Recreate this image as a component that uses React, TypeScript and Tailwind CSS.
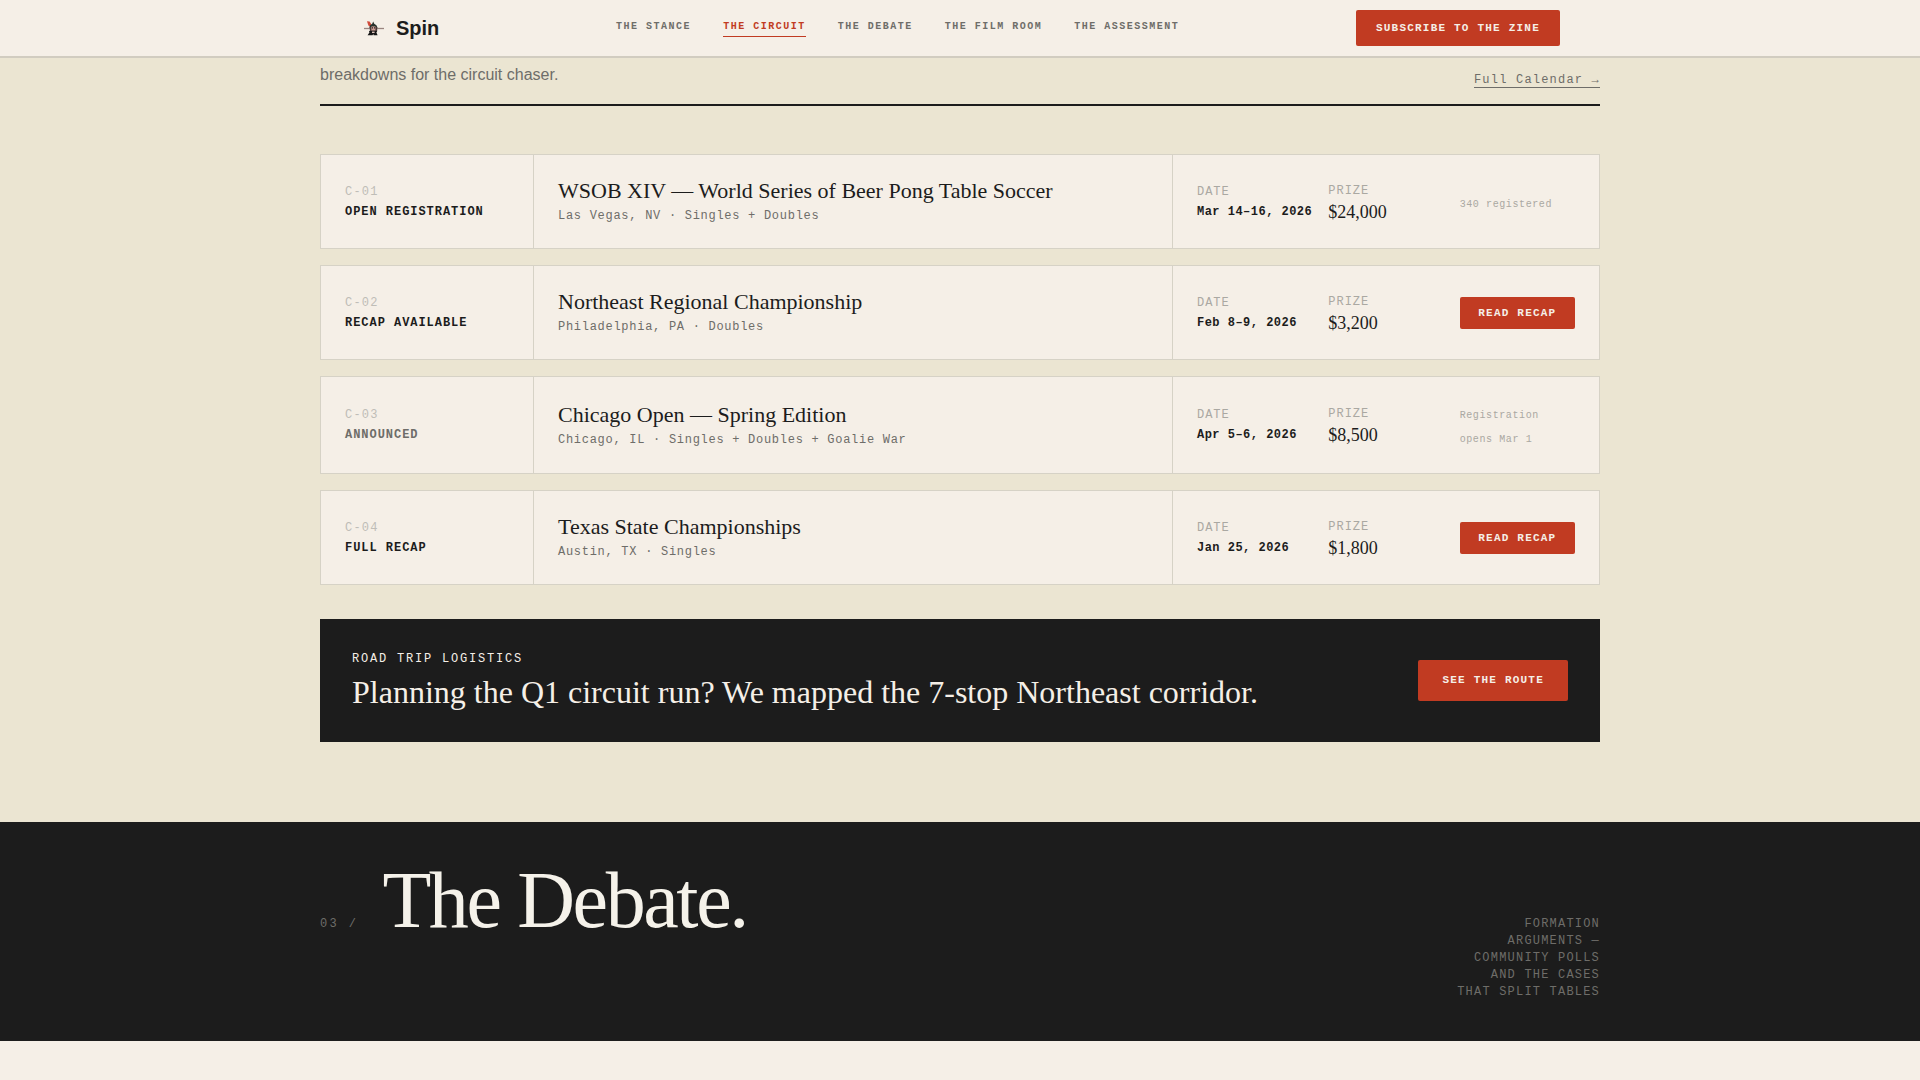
type NavItem = { label: string; href: string; active?: boolean };

const navItems: NavItem[] = [
  { label: "THE STANCE", href: "#stance" },
  { label: "THE CIRCUIT", href: "#circuit", active: true },
  { label: "THE DEBATE", href: "#debate" },
  { label: "THE FILM ROOM", href: "#film-room" },
  { label: "THE ASSESSMENT", href: "#assessment" },
];

type CircuitEvent = {
  id: string;
  status: string;
  muted?: boolean;
  title: string;
  place: string;
  date: string;
  prize: string;
  note?: string;
};

const events: CircuitEvent[] = [
  {
    id: "C-01",
    status: "OPEN REGISTRATION",
    title: "WSOB XIV — World Series of Beer Pong Table Soccer",
    place: "Las Vegas, NV · Singles + Doubles",
    date: "Mar 14–16, 2026",
    prize: "$24,000",
    note: "340 registered",
  },
  {
    id: "C-02",
    status: "RECAP AVAILABLE",
    title: "Northeast Regional Championship",
    place: "Philadelphia, PA · Doubles",
    date: "Feb 8–9, 2026",
    prize: "$3,200",
  },
  {
    id: "C-03",
    status: "ANNOUNCED",
    muted: true,
    title: "Chicago Open — Spring Edition",
    place: "Chicago, IL · Singles + Doubles + Goalie War",
    date: "Apr 5–6, 2026",
    prize: "$8,500",
    note: "Registration opens Mar 1",
  },
  {
    id: "C-04",
    status: "FULL RECAP",
    title: "Texas State Championships",
    place: "Austin, TX · Singles",
    date: "Jan 25, 2026",
    prize: "$1,800",
  },
];

function Logo() {
  return (
    <svg className="size-7" viewBox="0 0 28 28" aria-hidden="true">
      <path d="M4 14.500h20" stroke="#9a8580" strokeWidth="1.300" />
      <path d="M7 7.200l2.600.4 1.800 3-1 2.400-2-1.400z" fill="#d04a3a" />
      <path d="M9.200 13.800l1-2.600 2-1.400 1-2.200 1 2.200 2.200 1.400 1.200 2.600z" fill="#26322c" />
      <path d="M9.800 13h7.400v4l-1.800 1.400h-3.800L9.800 17z" fill="#4a3a38" />
      <path d="M11.400 12.400h4v4h-4z" fill="#cf9f96" />
      <path d="M12 13.200h1v1.200h-1zM14 13.200h1v1.200h-1z" fill="#2b2422" />
      <path d="M9 17h8.200l-.8 1.600 1.200 2.600h-4l-.4-1.400-.6 1.400h-5l1.800-2.600z" fill="#161616" />
      <path d="M12 17.600h2.600v1.400H12z" fill="#e0c4bc" />
    </svg>
  );
}

function ActionButton({ label, size }: { label: string; size: string }) {
  return (
    <button
      type="button"
      className={
        "rounded-xs bg-[#c13b22] text-center font-['Liberation_Mono',monospace] text-[11px] font-bold tracking-[0.11em] whitespace-nowrap text-[#f5efe7] " +
        size
      }
    >
      {label}
    </button>
  );
}

function Header() {
  return (
    <header className="border-b-2 border-[#d1ccc0] bg-[#f5efe7]">
      <div className="mx-auto flex max-w-[1280px] items-center justify-between px-10 py-2.5">
        <a href="#top" className="flex items-center gap-2">
          <Logo />
          <span className="text-xl font-bold">Spin</span>
        </a>
        <nav className="flex gap-8 font-['Liberation_Mono',monospace] text-[10px] leading-4 font-bold tracking-[0.15em]">
          {navItems.map((item) => (
            <a
              key={item.label}
              href={item.href}
              className={
                item.active
                  ? "border-b border-[#c13b22] pb-px text-[#c13b22]"
                  : "border-b border-transparent pb-px text-[#6e6d69]"
              }
            >
              {item.label}
            </a>
          ))}
        </nav>
        <ActionButton label="SUBSCRIBE TO THE ZINE" size="px-5 py-2.5 leading-4" />
      </div>
    </header>
  );
}

function EventRow({ event }: { event: CircuitEvent }) {
  return (
    <article className="grid grid-cols-[1fr_3fr_2fr] border border-[#d6d2c6] bg-[#f5efe7]">
      <div className="flex flex-col justify-center border-r border-[#d6d2c6] px-6 py-6 font-['Liberation_Mono',monospace] text-xs">
        <span className="leading-5 tracking-[0.1em] text-[#bfbdb7]">{event.id}</span>
        <span
          className={
            event.muted
              ? "leading-5 font-bold tracking-[0.08em] text-[#6e6d69]"
              : "leading-5 font-bold tracking-[0.08em] text-[#1c1c1c]"
          }
        >
          {event.status}
        </span>
      </div>
      <div className="flex flex-col justify-center border-r border-[#d6d2c6] px-6 py-6">
        <h3 className="font-['Liberation_Serif',serif] text-[22px] leading-6">{event.title}</h3>
        <p className="mt-1.5 font-['Liberation_Mono',monospace] text-xs leading-[15px] tracking-[0.06em] text-[#6e6d69]">
          {event.place}
        </p>
      </div>
      <div className="grid grid-cols-3 items-center gap-4 px-6 py-6">
        <div className="flex flex-col font-['Liberation_Mono',monospace] text-xs">
          <span className="leading-5 tracking-[0.08em] text-[#aaa8a2]">DATE</span>
          <span className="leading-5 font-bold tracking-[0.04em] whitespace-nowrap">{event.date}</span>
        </div>
        <div className="flex flex-col">
          <span className="font-['Liberation_Mono',monospace] text-xs leading-5 tracking-[0.08em] text-[#aaa8a2]">
            PRIZE
          </span>
          <span className="font-['Liberation_Serif',serif] text-lg leading-[22px]">{event.prize}</span>
        </div>
        {event.note ? (
          <p className="text-base leading-6">
            <span className="font-['Liberation_Mono',monospace] text-[10px] leading-none tracking-[0.06em] text-[#aaa8a2]">
              {event.note}
            </span>
          </p>
        ) : (
          <ActionButton label="READ RECAP" size="w-full py-2 leading-4" />
        )}
      </div>
    </article>
  );
}

export default function App() {
  return (
    <div className="min-h-screen bg-[#f5efe7] font-['Liberation_Sans',sans-serif] text-[#1c1c1c]">
      <Header />
      <main>
        <section id="circuit" className="bg-[#ebe5d2] pt-1 pb-20">
          <div className="mx-auto max-w-[1280px]">
            <div className="flex items-end justify-between border-b-2 border-[#1c1c1c] pb-4">
              <p className="text-base leading-[26px] text-[#6e6d69]">breakdowns for the circuit chaser.</p>
              <a
                href="#calendar"
                className="border-b border-[#6e6d69] font-['Liberation_Mono',monospace] text-xs leading-[14px] tracking-[0.1em] text-[#6e6d69]"
              >
                Full Calendar →
              </a>
            </div>
            <div className="mt-12 flex flex-col gap-4">
              {events.map((event) => (
                <EventRow key={event.id} event={event} />
              ))}
            </div>
            <aside className="mt-[34px] flex items-center justify-between bg-[#1c1c1c] p-8 text-[#f5efe7]">
              <div>
                <p className="font-['Liberation_Mono',monospace] text-xs leading-4 tracking-[0.15em]">
                  ROAD TRIP LOGISTICS
                </p>
                <h3 className="mt-2 font-['Liberation_Serif',serif] text-[32px] leading-[35px]">
                  Planning the Q1 circuit run? We mapped the 7-stop Northeast corridor.
                </h3>
              </div>
              <ActionButton label="SEE THE ROUTE" size="px-6 py-3 leading-[17px]" />
            </aside>
          </div>
        </section>
        <section id="debate" className="bg-[#1c1c1c] py-10">
          <div className="mx-auto flex max-w-[1280px] items-baseline gap-6">
            <span className="font-['Liberation_Mono',monospace] text-xs tracking-[0.2em] text-[#6e6d69]">03 /</span>
            <h2 className="font-['Liberation_Serif',serif] text-[80px] leading-[76px] tracking-[-0.03em] text-[#f5f2ea]">
              The Debate.
            </h2>
            <p className="ml-auto max-w-[148px] text-right font-['Liberation_Mono',monospace] text-xs leading-[17px] tracking-[0.1em] text-[#6e6d69]">
              FORMATION ARGUMENTS — COMMUNITY POLLS AND THE CASES THAT SPLIT TABLES
            </p>
          </div>
        </section>
      </main>
    </div>
  );
}
